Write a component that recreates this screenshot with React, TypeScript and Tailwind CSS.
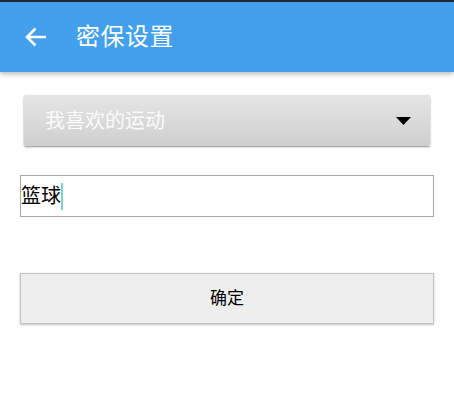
const font = "font-['Roboto','Noto_Sans_CJK_SC',sans-serif]";

export default function App() {
  return (
    <div className={`w-[454px] h-[400px] bg-white overflow-hidden ${font}`}>
      <div className="h-[2px] bg-[#1f2a36]" />
      <header className="h-[70px] bg-[#42a0ec] flex items-center shadow-[0_2px_5px_rgba(0,0,0,0.28)] relative">
        <svg className="ml-[25px] w-[22px] h-[20px]" viewBox="0 0 22 20" fill="none">
          <path d="M21 10H2.5M10.5 1.5L2 10l8.5 8.5" stroke="white" strokeWidth="2.6" />
        </svg>
        <h1 className="ml-[29px] text-white text-[24px] leading-none tracking-[0.5px]">密保设置</h1>
      </header>

      <div className="px-[20px]">
        <div className="mt-[23px] mx-[4px] h-[51px] flex items-center justify-between rounded-[2px] bg-[linear-gradient(to_bottom,#e5e5e5,#cfcfcf)] shadow-[0_1px_2px_rgba(0,0,0,0.45)] pl-[21px] pr-[19px]">
          <span className="text-[20px] text-[#fafafa]">我喜欢的运动</span>
          <svg className="w-[15px] h-[8px]" viewBox="0 0 15 8">
            <path d="M0 0h15L7.5 8z" fill="black" />
          </svg>
        </div>

        <div className="mt-[29px] h-[42px] border border-[#a8a8a8] flex items-center">
          <span className="text-[20px] text-black leading-none">篮球</span>
          <span className="w-[2px] h-[27px] bg-[#7fd3c9]" />
        </div>

        <button className="mt-[56px] w-[414px] h-[51px] bg-[#eeeeee] border border-[#c4c4c4] shadow-[0_1px_2px_rgba(0,0,0,0.25)] text-[17px] text-black">
          确定
        </button>
      </div>
    </div>
  );
}
